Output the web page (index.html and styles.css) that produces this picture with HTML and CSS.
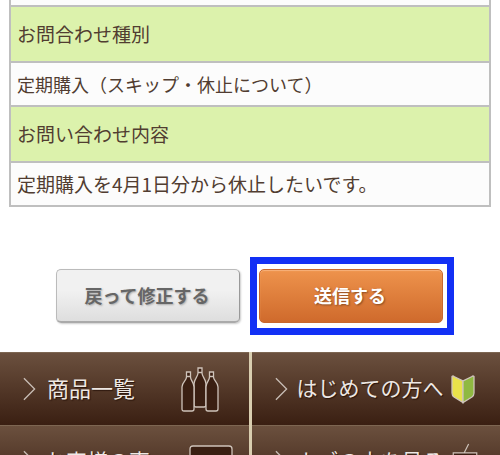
FILE: index.html
```html
<!DOCTYPE html>
<html lang="ja">
    <head>
        <meta charset="UTF-8" />
        <meta name="viewport" content="width=device-width, initial-scale=1.0" />
        <title>お問い合わせ内容の確認</title>
        <link rel="stylesheet" href="styles.css">
    </head>
    <body>
        <!-- 確認内容 -->
        <table class="confirm">
            <tr><td class="prev"></td></tr>
            <tr><th scope="row">お問合わせ種別</th></tr>
            <tr><td class="kind">定期購入（スキップ・休止について）</td></tr>
            <tr><th scope="row">お問い合わせ内容</th></tr>
            <tr><td>定期購入を4月1日分から休止したいです。</td></tr>
        </table>

        <!-- ボタン -->
        <div class="btns">
            <button type="button" class="btn back">戻って修正する</button>
            <div class="mark">
                <button type="submit" class="btn send">送信する</button>
            </div>
        </div>

        <!-- フッターメニュー -->
        <nav class="menu">
            <a href="#" class="item">
                <svg class="arrow" viewBox="0 0 14 26"><path d="M1 1.500L12.500 13L1 24.500" /></svg>
                <span class="txt big">商品一覧</span>
                <svg class="icon bottles" viewBox="0 0 38 46">
                    <path d="M17 2h4v5c0 4 4 6 4 11v21q0 2-2 2h-8q-2 0-2-2V18c0-5 4-7 4-11zM17 6.500h4" />
                    <path d="M5.500 6h4v5c0 4 3.500 5 3.500 10v22q0 2-2 2H3q-2 0-2-2V21c0-5 4.500-6 4.500-10zM5.500 10.500h4" />
                    <path d="M28.500 6h4v5c0 4 4.500 5 4.500 10v22q0 2-2 2h-8q-2 0-2-2V21c0-5 3.500-6 3.500-10zM28.500 10.500h4" />
                </svg>
            </a>
            <a href="#" class="item">
                <svg class="arrow" viewBox="0 0 14 26"><path d="M1 1.500L12.500 13L1 24.500" /></svg>
                <span class="txt">はじめての方へ</span>
                <svg class="icon leaf" viewBox="0 0 24 29">
                    <path fill="#e9e24a" d="M1 1.500q1-1 2 0L12 6v21.500L3 22q-2-1.500-2-4z" />
                    <path fill="#8fb941" d="M23 1.500q-1-1-2 0L12 6v21.500L21 22q2-1.500 2-4z" />
                </svg>
            </a>
            <a href="#" class="item">
                <svg class="arrow" viewBox="0 0 14 26"><path d="M1 1.500L12.500 13L1 24.500" /></svg>
                <span class="txt">お客様の声</span>
                <svg class="icon voice" viewBox="0 0 44 34">
                    <path d="M4 1h36q3 0 3 3v20q0 3-3 3H18l-7 6v-6H4q-3 0-3-3V4q0-3 3-3z" />
                </svg>
            </a>
            <a href="#" class="item">
                <svg class="arrow" viewBox="0 0 14 26"><path d="M1 1.500L12.500 13L1 24.500" /></svg>
                <span class="txt">カゴの中を見る</span>
                <svg class="icon cart" viewBox="0 0 28 42">
                    <path d="M1 11h26v5H1zM4 16l3 18h14l3-18M13 11L18 1" />
                </svg>
            </a>
        </nav>
    </body>
</html>
```

FILE: styles.css
```css
* {
    box-sizing: border-box;
}
body {
    margin: 0;
    background: #fff;
    color: #513d31;
    font-family: "Noto Sans CJK JP", sans-serif;
}
/* 確認テーブル */
.confirm {
    width: calc(100% - 18px);
    margin: 0 9px;
    border-collapse: collapse;
    font-size: 19px;
    line-height: 28px;
}
.confirm th,
.confirm td {
    padding: 7px 6px;
    border: 2px solid #bfbfbf;
    background: #fcfcfc;
    font-weight: 400;
    text-align: left;
}
.confirm th {
    padding: 13px 6px;
    background: #dcf2ac;
}
.confirm .kind {
    font-size: 18px;
}
.confirm .prev {
    height: 6px;
    padding: 0;
    border-top: 0;
}
/* ボタン */
.btns {
    display: flex;
    justify-content: center;
    align-items: center;
    gap: 10px;
    padding: 50px 0 17px 10px;
}
.btn {
    width: 184px;
    height: 54px;
    padding: 0 2px 2px 0;
    border-radius: 5px;
    font-family: inherit;
    font-size: 18px;
    font-weight: 700;
}
.back {
    border: 1px solid #bbb;
    border-right-color: #999;
    border-bottom: 2px solid #aaa;
    background: linear-gradient(#f1f1f1 40%, #dedede);
    box-shadow: 1px 1px 2px #ccc;
    color: #666;
    text-shadow: 1px 1px 2px #aaa;
}
.send {
    display: block;
    border: 1px solid #c8682e;
    background: linear-gradient(#ee934c, #cf6a2c);
    box-shadow: inset 0 1px 1px #f7b27c;
    color: #fff;
    text-shadow: 1px 1px 2px #8a4a20;
}
/* 送信ボタンの強調枠 */
.mark {
    padding: 5px 4px 5px 2px;
    border: 7px solid #1230f5;
}
/* フッターメニュー */
.menu {
    display: grid;
    grid-template-columns: 1fr 1fr;
    column-gap: 3px;
    background: #d9ceb0;
}
.item {
    display: flex;
    align-items: center;
    height: 73px;
    padding: 0 25px 0 23px;
    border-top: 1px solid #7d6652;
    background: linear-gradient(#6b503e, #3a1f12);
    color: #eee8e4;
    text-decoration: none;
}
.arrow {
    width: 13px;
    height: 26px;
    fill: none;
    stroke: #c9beb6;
    stroke-width: 1.4;
}
.txt {
    margin-left: 9px;
    padding-bottom: 5px;
    font-size: 21px;
    line-height: 30px;
    white-space: nowrap;
    text-shadow: 1px 1px 1px #2a150b;
}
.big {
    margin-left: 11px;
    font-size: 22px;
}
.icon {
    flex: none;
    margin-left: auto;
    fill: #3a1f12;
    stroke: #cfc4bb;
    stroke-width: 1.3;
}
.bottles {
    width: 38px;
    height: 46px;
    margin-right: 5px;
}
.leaf {
    width: 24px;
    height: 29px;
}
.voice {
    width: 44px;
    height: 34px;
    margin-right: -9px;
}
.cart {
    width: 28px;
    height: 38px;
    margin-right: -4px;
}
```
